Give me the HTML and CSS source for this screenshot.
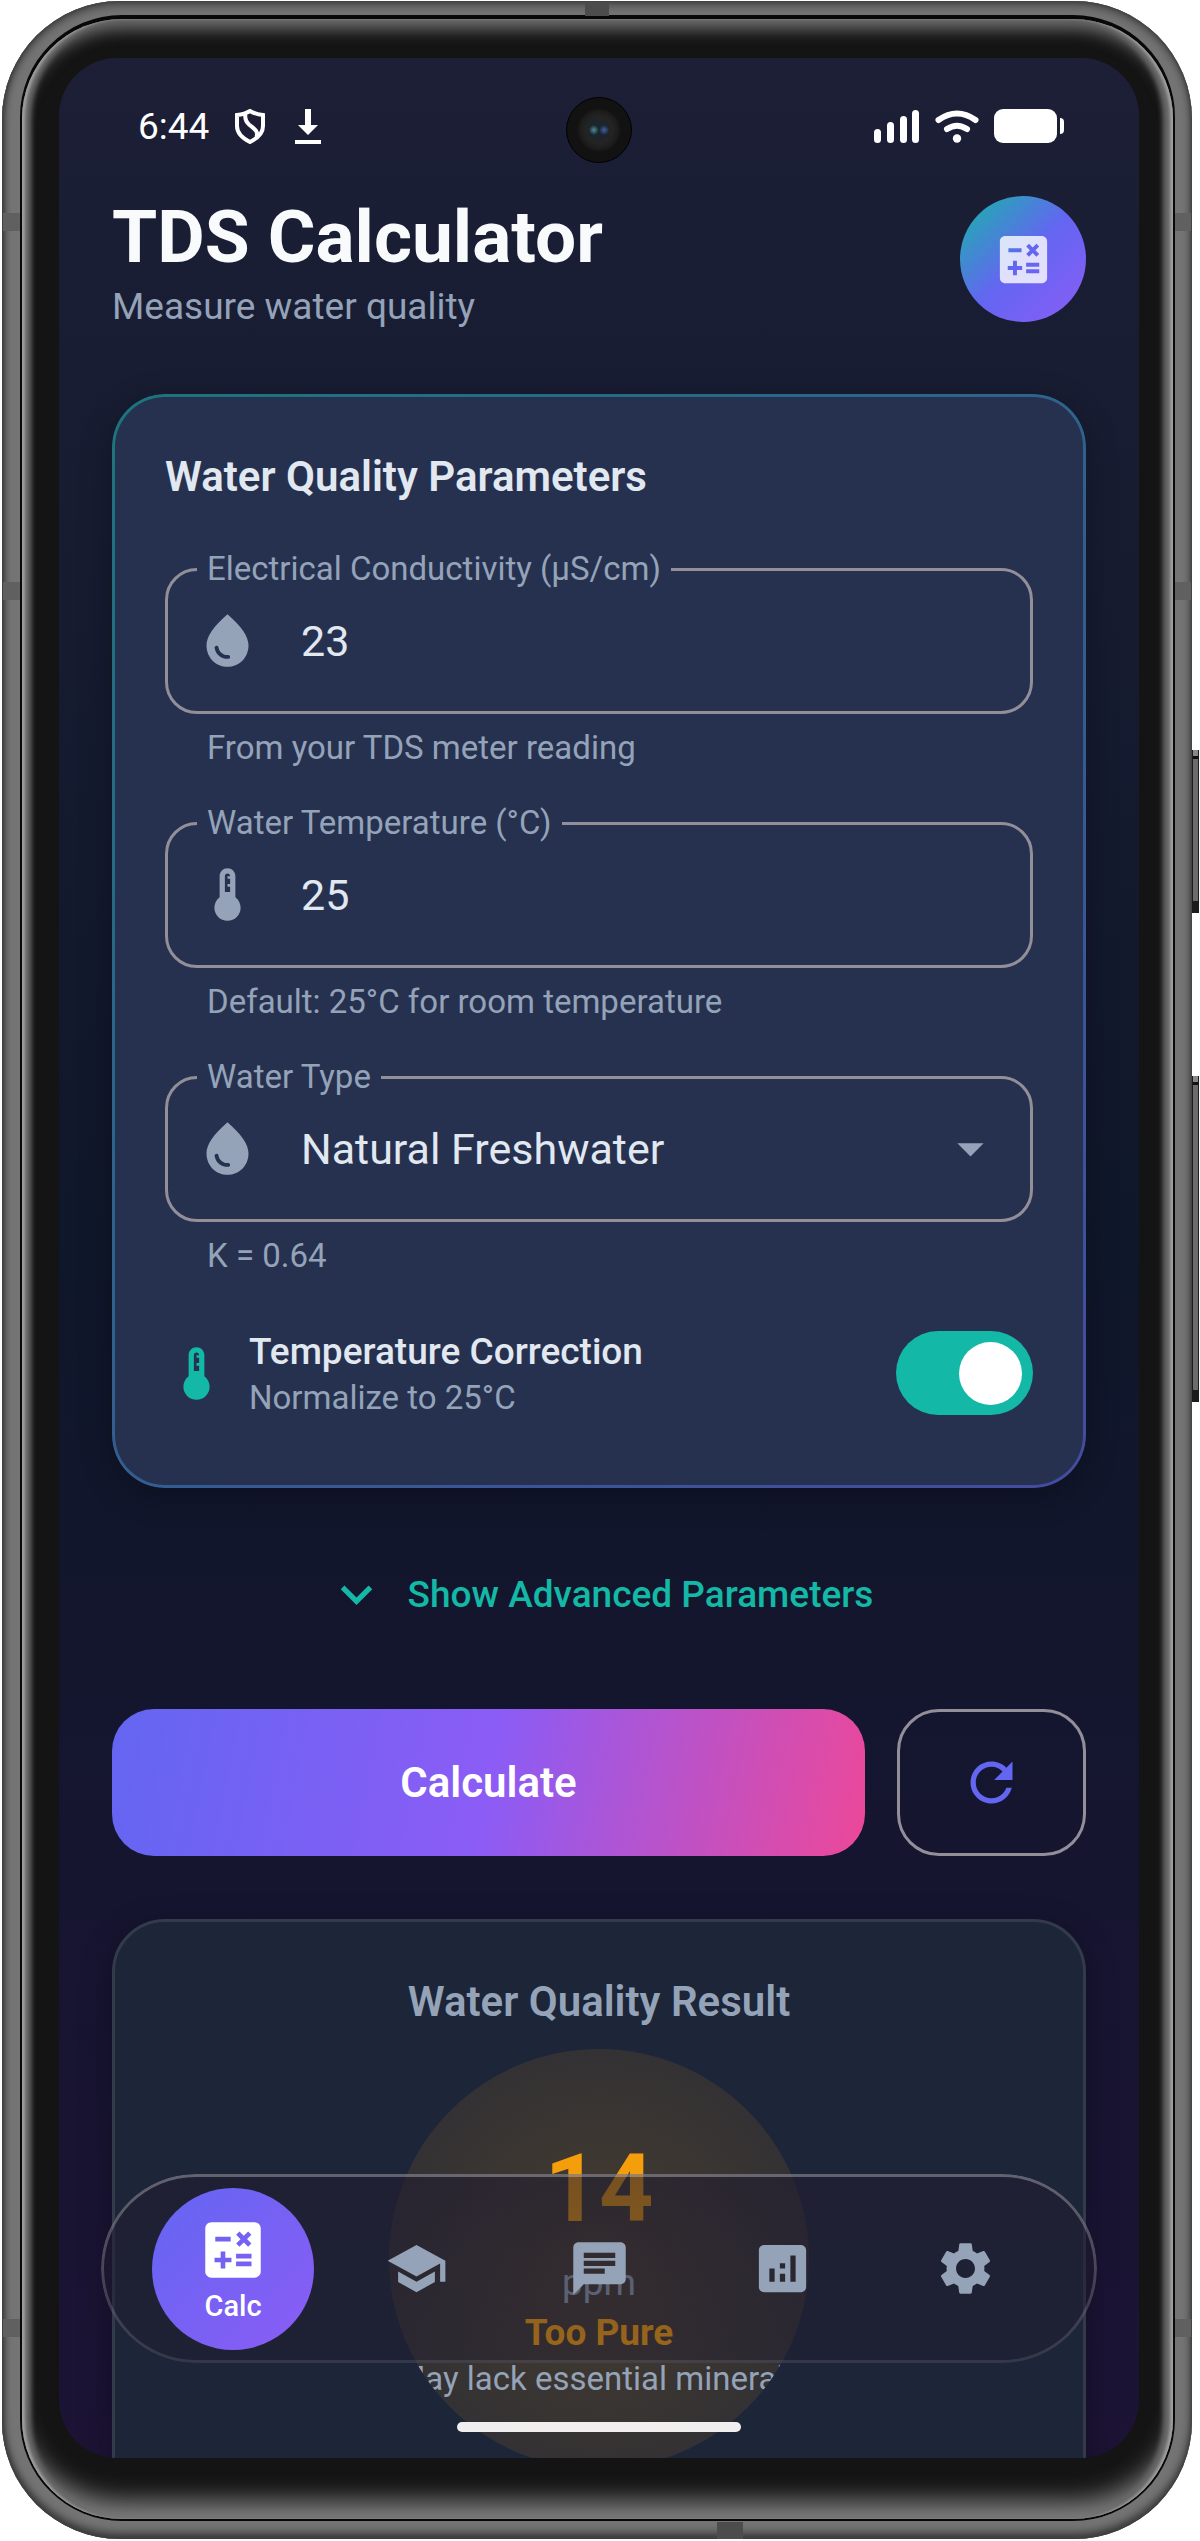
FILE: index.html
```html
<!DOCTYPE html>
<html lang="en">
<head>
<meta charset="utf-8">
<meta name="viewport" content="width=device-width, initial-scale=1">
<title>TDS Calculator</title>
<link rel="stylesheet" href="styles.css">
</head>
<body>
<svg width="0" height="0" class="sprite" aria-hidden="true">
  <symbol id="calculate" viewBox="0 0 24 24"><path d="M19 3H5c-1.1 0-2 .9-2 2v14c0 1.1.9 2 2 2h14c1.1 0 2-.9 2-2V5c0-1.1-.9-2-2-2zm-5.97 4.06L14.09 6l1.41 1.41L16.91 6l1.06 1.06-1.41 1.41 1.41 1.41-1.06 1.06-1.41-1.4-1.41 1.41-1.06-1.06 1.41-1.41-1.41-1.42zm-6.78.66h5v1.5h-5v-1.5zM11.5 16h-2v2H8v-2H6v-1.5h2v-2h1.5v2h2V16zm6.5 1.25h-5v-1.5h5v1.5zm0-2.5h-5v-1.5h5v1.5z"/></symbol>
  <symbol id="drop" viewBox="0 0 24 24"><path d="M12 2c-5.33 4.55-8 8.48-8 11.8 0 4.98 3.8 8.2 8 8.2s8-3.22 8-8.2C20 10.480 17.330 6.550 12 2zM7.830 14c.37 0 .67.26.74.62.41 2.220 2.280 2.980 3.640 2.870.43-.02.79.32.79.75 0 .4-.32.73-.72.75-2.130.13-4.620-1.090-5.190-4.120C7.010 14.420 7.370 14 7.830 14z"/></symbol>
  <symbol id="thermostat" viewBox="0 0 24 24"><path d="M15 13V5c0-1.66-1.34-3-3-3S9 3.34 9 5v8c-1.21.91-2 2.37-2 4 0 2.76 2.24 5 5 5s5-2.24 5-5c0-1.63-.79-3.090-2-4zm-4-8c0-.55.45-1 1-1s1 .45 1 1h-1v1h1v2h-1v1h1v2h-2V5z"/></symbol>
</svg>

<div class="phone">
  <i class="key key-power"></i>
  <i class="key key-volume"></i>
  <i class="band band-top"></i>
  <i class="band band-bottom"></i>
  <i class="band band-left band-upper"></i>
  <i class="band band-left band-middle"></i>
  <i class="band band-left band-lower"></i>
  <i class="band band-right band-upper"></i>
  <i class="band band-right band-middle"></i>
  <i class="band band-right band-lower"></i>
  <div class="seam">
    <div class="bezel">
      <div class="screen">
        <i class="camera"></i>
        <div class="scroll">
          <div class="status">
            <span class="time">6:44</span>
            <svg class="status-shield" viewBox="0 0 30 35" aria-hidden="true"><path d="M15 2C11 4.500 7 5.500 2 6V17c0 8 6 12.500 13 16C22 29.500 28 25 28 17V6C23 5.500 19 4.500 15 2zM10.500 4.500c-1 5 0 8 4 11.500 5 4 9 6 7 12"/></svg>
            <svg class="status-download" viewBox="0 0 26 35" aria-hidden="true"><path d="M10 0h6v16h7L13 26 3 16h7zM0 31h26v4H0z"/></svg>
            <span class="status-right">
              <svg class="status-signal" viewBox="0 0 46 33" aria-hidden="true"><rect y="19" width="7" height="14" rx="3.500"/><rect x="13" y="12" width="7" height="21" rx="3.500"/><rect x="26" y="6" width="7" height="27" rx="3.500"/><rect x="38" width="7" height="33" rx="3.500"/></svg>
              <svg class="status-wifi" viewBox="0 0 44 33" aria-hidden="true"><path class="arc" d="M3.500 10Q22-3 40.500 10M12 19q10-6.500 20 0"/><circle cx="22" cy="28.500" r="4.200"/></svg>
              <svg class="status-battery" viewBox="0 0 70 34" aria-hidden="true"><rect width="63" height="34" rx="9"/><path d="M66 9q4 0 4 4v8q0 4-4 4z"/></svg>
            </span>
          </div>

          <header class="top">
            <div>
              <h1>TDS Calculator</h1>
              <p class="subtitle">Measure water quality</p>
            </div>
            <div class="badge"><svg class="icon" aria-hidden="true"><use href="#calculate"/></svg></div>
          </header>

          <main>
            <section class="card params">
              <h2>Water Quality Parameters</h2>
              <div class="field">
                <fieldset>
                  <legend><label for="ec">Electrical Conductivity (µS/cm)</label></legend>
                  <div class="control">
                    <svg class="icon" aria-hidden="true"><use href="#drop"/></svg>
                    <input id="ec" type="text" inputmode="decimal" value="23">
                  </div>
                </fieldset>
                <p class="hint">From your TDS meter reading</p>
              </div>
              <div class="field">
                <fieldset>
                  <legend><label for="temp">Water Temperature (°C)</label></legend>
                  <div class="control">
                    <svg class="icon" aria-hidden="true"><use href="#thermostat"/></svg>
                    <input id="temp" type="text" inputmode="decimal" value="25">
                  </div>
                </fieldset>
                <p class="hint">Default: 25°C for room temperature</p>
              </div>
              <div class="field">
                <fieldset>
                  <legend><label for="type">Water Type</label></legend>
                  <div class="control">
                    <svg class="icon" aria-hidden="true"><use href="#drop"/></svg>
                    <select id="type"><option>Natural Freshwater</option></select>
                    <svg class="icon" viewBox="0 0 24 24" aria-hidden="true"><path d="M7 10l5 5 5-5z"/></svg>
                  </div>
                </fieldset>
                <p class="hint">K = 0.64</p>
              </div>
              <div class="correction">
                <svg class="icon" aria-hidden="true"><use href="#thermostat"/></svg>
                <label for="correct"><span class="correction-title">Temperature Correction</span><span class="correction-note">Normalize to 25°C</span></label>
                <input id="correct" class="switch" type="checkbox" role="switch" checked>
              </div>
            </section>

            <button class="advanced" type="button">
              <svg class="icon" viewBox="0 0 24 24" aria-hidden="true"><path d="M16.590 8.590L12 13.170 7.410 8.590 6 10l6 6 6-6z"/></svg>
              Show Advanced Parameters
            </button>

            <div class="actions">
              <button class="calculate" type="button">Calculate</button>
              <button class="reset" type="button" aria-label="Reset">
                <svg class="icon" viewBox="0 0 24 24" aria-hidden="true"><path d="M17.650 6.350C16.200 4.900 14.210 4 12 4c-4.420 0-7.990 3.580-7.990 8s3.570 8 7.990 8c3.730 0 6.840-2.550 7.730-6h-2.080c-.82 2.330-3.040 4-5.650 4-3.310 0-6-2.690-6-6s2.690-6 6-6c1.660 0 3.140.69 4.220 1.780L13 11h7V4l-2.350 2.350z"/></svg>
              </button>
            </div>

            <section class="card result">
              <h2>Water Quality Result</h2>
              <div class="dial">
                <span class="dial-value">14</span>
                <span class="dial-unit">ppm</span>
                <span class="dial-grade">Too Pure</span>
                <span class="dial-note">May lack essential minerals</span>
              </div>
            </section>
          </main>
        </div>

        <nav class="tabs">
          <a class="tab active" href="#calc" aria-current="page"><svg class="icon" aria-hidden="true"><use href="#calculate"/></svg>Calc</a>
          <a class="tab" href="#learn" aria-label="Learn"><svg class="icon" viewBox="0 0 24 24" aria-hidden="true"><path d="M5 13.180v4L12 21l7-3.820v-4L12 17l-7-3.820zM12 3L1 9l11 6 9-4.910V17h2V9L12 3z"/></svg></a>
          <a class="tab" href="#chat" aria-label="Chat"><svg class="icon" viewBox="0 0 24 24" aria-hidden="true"><path d="M20 2H4c-1.100 0-1.990.9-1.990 2L2 22l4-4h14c1.100 0 2-.9 2-2V4c0-1.100-.9-2-2-2zM6 9h12v2H6V9zm8 5H6v-2h8v2zm4-6H6V6h12v2z"/></svg></a>
          <a class="tab" href="#stats" aria-label="Analytics"><svg class="icon" viewBox="0 0 24 24" aria-hidden="true"><path d="M19 3H5c-1.100 0-2 .9-2 2v14c0 1.100.9 2 2 2h14c1.100 0 2-.9 2-2V5c0-1.100-.9-2-2-2zM9 17H7v-5h2v5zm4 0h-2v-3h2v3zm0-5h-2v-2h2v2zm4 5h-2V7h2v10z"/></svg></a>
          <a class="tab" href="#settings" aria-label="Settings"><svg class="icon" viewBox="0 0 24 24" aria-hidden="true"><path d="M19.140 12.940c.04-.3.06-.61.06-.94 0-.32-.02-.64-.07-.94l2.030-1.580c.18-.14.23-.41.12-.61l-1.920-3.320c-.12-.22-.37-.29-.59-.22l-2.390.96c-.5-.38-1.030-.7-1.620-.94l-.36-2.540c-.04-.24-.24-.41-.48-.41h-3.840c-.24 0-.43.17-.47.41l-.36 2.540c-.59.24-1.130.57-1.620.94l-2.390-.96c-.22-.08-.47 0-.59.22L2.740 8.870c-.12.21-.08.47.12.61l2.030 1.580c-.05.3-.09.63-.09.94s.02.64.07.94l-2.030 1.580c-.18.14-.23.41-.12.61l1.920 3.320c.12.22.37.29.59.22l2.390-.96c.5.38 1.030.7 1.620.94l.36 2.540c.05.24.24.41.48.41h3.840c.24 0 .44-.17.47-.41l.36-2.540c.59-.24 1.130-.56 1.620-.94l2.390.96c.22.08.47 0 .59-.22l1.920-3.320c.12-.22.07-.47-.12-.61l-2.010-1.580zM12 15.600c-1.980 0-3.600-1.620-3.600-3.600s1.620-3.600 3.600-3.600 3.600 1.620 3.600 3.600-1.620 3.600-3.600 3.600z"/></svg></a>
        </nav>
        <i class="home"></i>
      </div>
    </div>
  </div>
</div>
</body>
</html>
```

FILE: styles.css
```css
:root {
  --text: #e2e8f0;
  --muted: #94a3b8;
  --teal: #14b8a6;
  --indigo: #6366f1;
  --violet: #8b5cf6;
  --amber: #f59e0b;
  --outline: #938f99;
}

* { box-sizing: border-box; }

body {
  margin: 0;
  height: 100vh;
  padding: 1px 8px 2px 2px;
  background: #fff;
  color: var(--text);
  font-family: Roboto, "Liberation Sans", sans-serif;
}

h1, h2, p { margin: 0; }
button, input, select { font-family: inherit; }
.sprite { position: absolute; }

.icon {
  display: block;
  flex: none;
  width: 63px;
  height: 63px;
  fill: currentColor;
}

/* Device body */
.phone {
  position: relative;
  height: 100%;
  padding: 14px 17px 18px 18px;
  border-radius: 118px;
  background: #747474;
  box-shadow: inset 0 0 3px 1px #3c3f3c, inset 0 5px 8px #4a4a4a, inset 0 -6px 8px #3a3a3a, inset 4px 0 5px -2px #505050;
}

.seam {
  height: 100%;
  padding: 4px 2px 2px;
  border-radius: 102px;
  background: #080808;
}

.bezel {
  height: 100%;
  padding: 39px 34px 61px 37px;
  border-radius: 100px;
  background: #141414;
  box-shadow:
    inset 4px 0 3px -1px #a0a0a0,
    inset -4px 0 3px -1px #a0a0a0,
    inset 11px 0 5px -2px #686868,
    inset -12px 0 5px -2px #686868,
    inset 0 14px 16px -4px #707070,
    inset 0 -28px 24px -10px #808080;
}

.key {
  position: absolute;
  right: -7px;
  width: 7px;
  border: solid #1c1c1c;
  border-width: 0 1px 12px;
  background: linear-gradient(#888 6px, #111 6px, #111 9px, #6c6c6c 9px);
}
.key-power { top: 749px; height: 163px; }
.key-volume { top: 1075px; height: 326px; }

.band { position: absolute; background: #606060; }
.band-top { top: 1px; left: 583px; width: 24px; height: 14px; background: #4c4c4c; }
.band-bottom { bottom: 0; left: 715px; width: 26px; height: 17px; background: #4c4c4c; }
.band-left { left: 1px; width: 17px; height: 18px; }
.band-right { right: 1px; width: 16px; height: 18px; }
.band-upper { top: 212px; }
.band-middle { top: 581px; }
.band-lower { bottom: 202px; }

/* Screen */
.screen {
  position: relative;
  height: 100%;
  overflow: hidden;
  border-radius: 58px;
  background: linear-gradient(#1c1f36, #0f172a 50%, #1c1335);
}

.camera {
  position: absolute;
  top: 39px;
  left: 50%;
  width: 66px;
  height: 66px;
  margin-left: -33px;
  border: 1px solid #000;
  border-radius: 50%;
  background:
    radial-gradient(circle at 42% 50%, #4a8f98 0, transparent 5px),
    radial-gradient(circle at 58% 50%, #3f5fa8 0, transparent 5px),
    radial-gradient(circle, #1c242c 9px, #242424 13px, #1c1c1c 19px, #121212 22px);
}

.scroll {
  height: 100%;
  padding: 0 53px;
  overflow-y: auto;
  scrollbar-width: none;
}

.status {
  display: flex;
  align-items: center;
  height: 131px;
  padding: 5px 22px 0 26px;
  color: #fff;
  font-size: 37px;
}
.status svg { fill: currentColor; }
.status .status-shield { width: 30px; height: 35px; margin-left: 26px; fill: none; stroke: currentColor; stroke-width: 4; }
.status-download { width: 26px; height: 35px; margin-left: 30px; }
.status-right { display: flex; align-items: center; gap: 15px; margin-left: auto; }
.status-signal { width: 46px; height: 33px; }
.status-wifi { width: 44px; height: 33px; }
.status-wifi .arc { fill: none; stroke: currentColor; stroke-width: 6; stroke-linecap: round; }
.status-battery { width: 70px; height: 34px; }

.top {
  display: flex;
  align-items: center;
  justify-content: space-between;
}
h1 { color: #f8fafc; font-size: 73px; font-weight: 700; line-height: 96px; }
.subtitle { color: var(--muted); font-size: 37px; line-height: 44px; }
.badge {
  display: grid;
  place-items: center;
  width: 126px;
  height: 126px;
  border-radius: 50%;
  background: linear-gradient(135deg, var(--teal), var(--indigo) 50%, var(--violet));
  color: rgba(255, 255, 255, .8);
}

/* Cards */
.card {
  position: relative;
  padding: 53px;
  border-radius: 53px;
  box-shadow: 0 8px 32px rgba(0, 0, 0, .3);
}
h2 { font-size: 42px; font-weight: 600; line-height: 60px; }

.params { margin-top: 65px; background: #263150; }
.params::before, .tabs::before {
  content: "";
  position: absolute;
  inset: 0;
  padding: 3px;
  border-radius: inherit;
  background: linear-gradient(138deg, rgba(20, 184, 166, .5), rgba(99, 102, 241, .5));
  mask: linear-gradient(#000 0 0) content-box exclude, linear-gradient(#000 0 0);
  pointer-events: none;
}
.params h2 { margin-bottom: 42px; }

.field { margin-bottom: 31px; }
fieldset {
  min-width: 0;
  margin: 0;
  padding: 0;
  border: 3px solid var(--outline);
  border-radius: 32px;
}
legend { margin-left: 29px; padding: 0 10px; color: var(--muted); font-size: 33px; line-height: 40px; }
.control {
  display: flex;
  align-items: center;
  height: 141px;
  margin-top: -19px;
  padding: 0 28px;
  color: var(--muted);
}
.control input, .control select {
  flex: 1;
  min-width: 0;
  height: 100%;
  margin: 0;
  padding: 0 0 0 42px;
  border: 0;
  outline: 0;
  background: none;
  color: var(--text);
  font-size: 43px;
  appearance: none;
}
.control select option { background: #263150; }
.hint { margin-top: 10px; padding-left: 42px; color: var(--muted); font-size: 33px; line-height: 48px; }

.correction { display: flex; align-items: center; gap: 21px; height: 124px; color: var(--teal); }
.correction label { flex: 1; }
.correction span { display: block; }
.correction-title { color: var(--text); font-size: 37px; font-weight: 500; line-height: 50px; }
.correction-note { color: var(--muted); font-size: 33px; line-height: 42px; }
.switch {
  display: flex;
  align-items: center;
  width: 137px;
  height: 84px;
  margin: 0;
  padding: 0 11px;
  border-radius: 42px;
  background: #475569;
  appearance: none;
}
.switch::before { content: ""; width: 63px; height: 63px; border-radius: 50%; background: #fff; }
.switch:checked { justify-content: flex-end; background: var(--teal); }

/* Actions */
button { margin: 0; padding: 0; border: 0; background: none; color: inherit; }
.advanced {
  display: flex;
  align-items: center;
  justify-content: center;
  gap: 20px;
  width: 100%;
  height: 126px;
  margin: 43px 0 52px;
  color: var(--teal);
  font-size: 37px;
  font-weight: 500;
}
.actions { display: flex; gap: 32px; height: 147px; }
.calculate {
  flex: 1;
  border-radius: 42px;
  background: linear-gradient(101deg, var(--indigo), var(--violet) 50%, #ec4899);
  color: #fff;
  font-size: 42px;
  font-weight: 600;
}
.reset {
  display: grid;
  place-items: center;
  width: 189px;
  border: 3px solid var(--outline);
  border-radius: 42px;
  color: var(--indigo);
}

/* Result */
.result {
  margin-top: 63px;
  padding: 50px;
  border: 3px solid #333b4b;
  background: #1d2538;
  text-align: center;
}
.result h2 { color: var(--muted); }
.dial {
  display: flex;
  flex-direction: column;
  align-items: center;
  justify-content: center;
  width: 420px;
  height: 420px;
  margin: 17px auto 0;
  padding-top: 10px;
  overflow: hidden;
  border-radius: 50%;
  background: radial-gradient(circle, rgba(245, 158, 11, .2), rgba(245, 158, 11, .1) 70%);
  white-space: nowrap;
}
.dial-value { margin-bottom: 9px; color: var(--amber); font-size: 95px; font-weight: 700; line-height: 120px; }
.dial-unit { color: var(--muted); font-size: 37px; line-height: 50px; }
.dial-grade { color: var(--amber); font-size: 37px; font-weight: 700; line-height: 50px; }
.dial-note { color: var(--muted); font-size: 33px; line-height: 42px; }

/* Bottom navigation, floating over the scrolled content */
.tabs {
  position: absolute;
  right: 42px;
  bottom: 95px;
  left: 42px;
  display: flex;
  align-items: center;
  height: 189px;
  padding: 0 40px;
  border-radius: 95px;
  background: linear-gradient(rgba(32, 28, 47, .6), rgba(32, 28, 47, .42));
}
.tabs::before { background: linear-gradient(rgba(255, 255, 255, .3), rgba(255, 255, 255, .1)); }
.tab { flex: 1; display: grid; justify-items: center; color: var(--muted); text-decoration: none; }
.tab.active {
  flex: none;
  align-content: center;
  width: 162px;
  height: 162px;
  margin: 0 11px;
  border-radius: 50%;
  background: linear-gradient(135deg, var(--indigo), var(--violet));
  color: #fff;
  font-size: 29px;
  font-weight: 500;
  line-height: 38px;
}
.active .icon { width: 74px; height: 74px; }

.home {
  position: absolute;
  bottom: 26px;
  left: 50%;
  width: 284px;
  height: 10px;
  margin-left: -142px;
  border-radius: 5px;
  background: #f0eeee;
}
```
